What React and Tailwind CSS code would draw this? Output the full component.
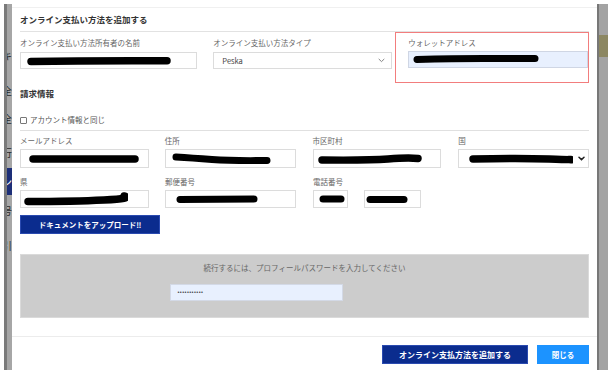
import React from "react";

const Redact = ({ w, h = 10, d, sw = 7 }) => (
  <svg width={w} height={h} viewBox={`0 0 ${w} ${h}`} className="block shrink-0">
    <path d={d} stroke="#000" strokeWidth={sw} strokeLinecap="round" fill="none" />
  </svg>
);

const Field = ({ label, className = "", inputClass = "h-[19px]", children }) => (
  <div className={className}>
    <div className="h-[10px] leading-[10px] text-[7.5px] text-[#666] whitespace-nowrap">{label}</div>
    <div className={`mt-[3px] flex items-center border border-[#dcdcdc] bg-white ${inputClass}`}>
      {children}
    </div>
  </div>
);

const Chevron = ({ bold }) => (
  <svg width="7" height="5" viewBox="0 0 7 5" className="block">
    <path
      d="M1 1.2 L3.5 3.6 L6 1.2"
      stroke={bold ? "#222" : "#777"}
      strokeWidth={bold ? 1.5 : 0.9}
      fill="none"
      strokeLinecap="round"
    />
  </svg>
);

const SideChar = ({ ch, h, dark }) => (
  <div
    className={`flex items-center justify-end overflow-hidden whitespace-nowrap text-[10px] ${
      dark ? "bg-[#1d2f78] text-white" : "text-[#2a2a2a]"
    } ${h}`}
  >
    {ch}
  </div>
);

export default function App() {
  return (
    <div className="flex h-[370px] w-[608px] overflow-hidden bg-white font-['Noto_Sans_CJK_JP','Noto_Sans',sans-serif]">
      {/* page behind, left edge */}
      <div className="flex w-[12px] shrink-0 pt-[4px]">
        <div className="w-[4px]" />
        <div className="w-[3px] bg-[#7a7a7a]" />
        <div className="flex w-[5px] flex-col bg-[#a6a6a6]">
          <div className="h-[44px]" />
          <SideChar ch="キ" h="h-[14px]" />
          <div className="h-[21px]" />
          <SideChar ch="全" h="h-[14px]" />
          <div className="h-[14px]" />
          <SideChar ch="全" h="h-[14px]" />
          <div className="h-[20px]" />
          <SideChar ch="行" h="h-[14px]" />
          <div className="h-[9px]" />
          <SideChar ch="ン" h="h-[27px]" dark />
          <div className="h-[8px]" />
          <SideChar ch="号" h="h-[14px]" />
          <div className="h-[21px]" />
          <SideChar ch="引" h="h-[14px]" />
        </div>
      </div>

      {/* modal */}
      <div className="mt-[7px] flex w-[585px] shrink-0 flex-col border-t border-[#f0f0f0] bg-white">
        <div className="mx-[8px] flex h-[24px] items-center border-b border-[#e2e2e2]">
          <span className="text-[8.5px] font-bold text-[#333]">オンライン支払い方法を追加する</span>
        </div>

        <div className="mx-[8px] flex">
          <Field label="オンライン支払い方法所有者の名前" className="w-[178px] pt-[6px]" inputClass="h-[17px] pl-[6px] mt-[4px]">
            <Redact w={146} h={10} d="M4 5.5 Q 60 4.5 140 4.8" sw={7.5} />
          </Field>
          <Field label="オンライン支払い方法タイプ" className="ml-[16px] w-[179px] pt-[6px]" inputClass="h-[17px] mt-[4px] pl-[8px] pr-[6px] justify-between">
            <span className="text-[7.5px] text-[#444]">Peska</span>
            <Chevron />
          </Field>
          <div className="ml-[3px] h-[51px] w-[195px] border-[1.5px] border-[#f27d7d] pl-[12.5px] pt-[5px]">
            <div className="h-[10px] leading-[10px] text-[7.5px] text-[#666]">ウォレットアドレス</div>
            <div className="mt-[2.5px] flex h-[17px] items-center border border-[#cfd6e4] bg-[#e8f0fe] pl-[4px]">
              <Redact w={126} h={10} d="M4 5.5 Q 40 4.5 70 4.5 T 122 4.5" sw={7} />
            </div>
          </div>
        </div>

        <div className="mx-[8px] mt-[4px] flex h-[12px] items-center">
          <span className="text-[8.5px] font-bold text-[#333]">請求情報</span>
        </div>

        <div className="mx-[8px] mt-[16px] flex h-[10px] items-center gap-[3px]">
          <div className="h-[7px] w-[7px] rounded-[1px] border border-[#777] bg-white" />
          <span className="text-[7.5px] text-[#555]">アカウント情報と同じ</span>
        </div>

        <div className="mx-[8px] mt-[5px] h-px bg-[#e0e0e0]" />

        <div className="mx-[8px] mt-[5px] flex">
          <Field label="メールアドレス" className="w-[129px]" inputClass="h-[19px] pl-[8px]">
            <Redact w={110} h={10} d="M4 5 L106 5" sw={7.5} />
          </Field>
          <Field label="住所" className="ml-[16px] w-[131px]" inputClass="h-[19px] pl-[6px]">
            <Redact w={99} h={12} d="M4 4 Q 20 5 40 6.5 T 95 7.5" sw={7} />
          </Field>
          <Field label="市区町村" className="ml-[17px] w-[129px]" inputClass="h-[19px] pl-[4px]">
            <Redact w={104} h={10} d="M4 6 Q 50 6.5 70 5 T 100 4.5" sw={7.5} />
          </Field>
          <Field label="国" className="ml-[17px] w-[131px]" inputClass="h-[19px] pl-[10px] pr-[3px] justify-between">
            <Redact w={104} h={10} d="M4 5 Q 50 4 80 5 T 100 5.5" sw={7.5} />
            <Chevron bold />
          </Field>
        </div>

        <div className="mx-[8px] mt-[9px] flex">
          <Field label="県" className="w-[129px]" inputClass="h-[18px] pl-[3px]">
            <Redact w={104} h={14} d="M4 9.5 Q 50 9.5 80 8 T 100 4" sw={7.5} />
          </Field>
          <Field label="郵便番号" className="ml-[16px] w-[131px]" inputClass="h-[18px] pl-[10px]">
            <Redact w={82} h={10} d="M4 5.5 Q 40 5 78 5" sw={7} />
          </Field>
          <Field label="電話番号" className="ml-[17px] w-[35px]" inputClass="h-[18px] pl-[5px]">
            <Redact w={26} h={10} d="M4 5 L22 5" sw={7} />
          </Field>
          <Field label="" className="ml-[16px] w-[57px]" inputClass="h-[18px] pl-[1px]">
            <Redact w={42} h={10} d="M4 5.5 L38 5.5" sw={7} />
          </Field>
        </div>

        <div className="mx-[8px] mt-[7px] flex">
          <button className="flex h-[19px] w-[140px] items-center justify-center border border-[#2a4ab0] bg-[#0b2c8e] text-[7.5px] font-bold text-white">
            ドキュメントをアップロード‼
          </button>
        </div>

        <div className="mx-[8px] mt-[20px] h-[64px] border border-[#dadada] bg-[#cccccc] pt-[8px]">
          <div className="h-[10px] text-center leading-[10px] text-[7.5px] text-[#666]">
            続行するには、プロフィールパスワードを入力してください
          </div>
          <div className="ml-[149px] mt-[11px] flex h-[17px] w-[173px] items-center border border-[#d3d9e6] bg-[#e8f0fe] pl-[6px]">
            <span className="font-['DejaVu_Sans',sans-serif] text-[5px] leading-none tracking-[-0.6px] text-[#222]">•••••••••••</span>
          </div>
        </div>

        <div className="mt-[18px] flex justify-end gap-[9px] border-t border-[#ececec] pr-[8px] pt-[8px]">
          <button className="flex h-[19px] w-[146px] items-center justify-center border border-[#2a4ab0] bg-[#0b2c8e] text-[8px] font-bold text-white">
            オンライン支払方法を追加する
          </button>
          <button className="flex h-[19px] w-[52px] items-center justify-center bg-[#1c93ff] text-[7.5px] font-bold text-white">
            閉じる
          </button>
        </div>
      </div>

      {/* page behind, right edge */}
      <div className="flex flex-1 pt-[4px]">
        <div className="w-[2px] bg-[#777]" />
        <div className="flex flex-1 flex-col bg-[#a3a3a3]">
          <div className="h-[31px]" />
          <div className="h-[22px] bg-[#8c8762]" />
        </div>
      </div>
    </div>
  );
}
